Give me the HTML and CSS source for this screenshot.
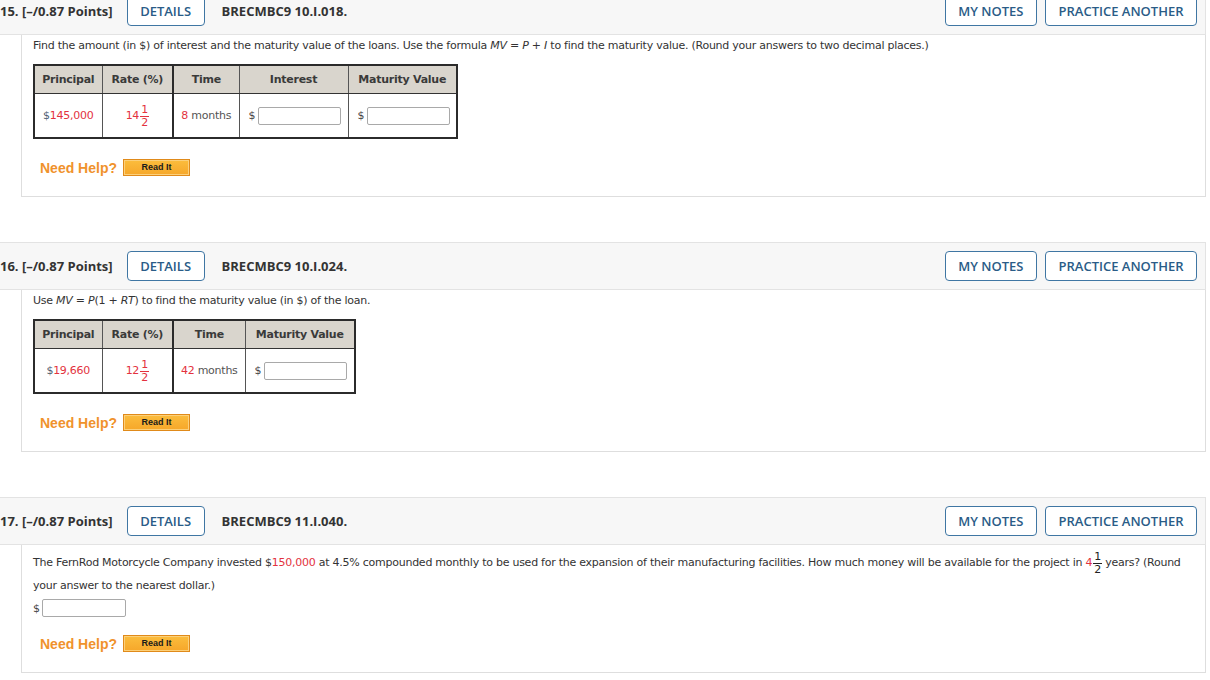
FILE: index.html
```html
<!DOCTYPE html>
<html>
<head>
<meta charset="utf-8">
<link rel="stylesheet" href="styles.css">
</head>
<body>
<div class="page">

  <section class="question first">
    <div class="qhead">
      <span class="points">15. [–/0.87 Points]</span>
      <button class="btn">DETAILS</button>
      <span class="code">BRECMBC9 10.I.018.</span>
      <div class="actions">
        <button class="btn">MY NOTES</button>
        <button class="btn">PRACTICE ANOTHER</button>
      </div>
    </div>
    <div class="qbody">
      <p class="prompt">Find the amount (in $) of interest and the maturity value of the loans. Use the formula <i>MV</i> = <i>P</i> + <i>I</i> to find the maturity value. (Round your answers to two decimal places.)</p>
      <table class="loan">
        <colgroup><col style="width:68px"><col style="width:71px"><col style="width:66px"><col style="width:109px"><col style="width:109px"></colgroup>
        <tr><th>Principal</th><th class="sep">Rate (%)</th><th>Time</th><th>Interest</th><th>Maturity Value</th></tr>
        <tr>
          <td><span class="dollar">$</span><span class="red">145,000</span></td>
          <td class="sep"><span class="red">14<span class="frac"><span class="num">1</span><span class="den">2</span></span></span></td>
          <td><span class="red">8</span> months</td>
          <td class="inp"><span class="cur">$</span><span class="box"></span></td>
          <td class="inp"><span class="cur">$</span><span class="box"></span></td>
        </tr>
      </table>
      <div class="help"><span class="need">Need Help?</span><span class="readit">Read It</span></div>
    </div>
  </section>

  <section class="question">
    <div class="qhead">
      <span class="points">16. [–/0.87 Points]</span>
      <button class="btn">DETAILS</button>
      <span class="code">BRECMBC9 10.I.024.</span>
      <div class="actions">
        <button class="btn">MY NOTES</button>
        <button class="btn">PRACTICE ANOTHER</button>
      </div>
    </div>
    <div class="qbody">
      <p class="prompt">Use <i>MV</i> = <i>P</i>(1 + <i>RT</i>) to find the maturity value (in $) of the loan.</p>
      <table class="loan">
        <colgroup><col style="width:68px"><col style="width:71px"><col style="width:72px"><col style="width:110px"></colgroup>
        <tr><th>Principal</th><th class="sep">Rate (%)</th><th>Time</th><th>Maturity Value</th></tr>
        <tr>
          <td><span class="dollar">$</span><span class="red">19,660</span></td>
          <td class="sep"><span class="red">12<span class="frac"><span class="num">1</span><span class="den">2</span></span></span></td>
          <td><span class="red">42</span> months</td>
          <td class="inp"><span class="cur">$</span><span class="box"></span></td>
        </tr>
      </table>
      <div class="help"><span class="need">Need Help?</span><span class="readit">Read It</span></div>
    </div>
  </section>

  <section class="question">
    <div class="qhead">
      <span class="points">17. [–/0.87 Points]</span>
      <button class="btn">DETAILS</button>
      <span class="code">BRECMBC9 11.I.040.</span>
      <div class="actions">
        <button class="btn">MY NOTES</button>
        <button class="btn">PRACTICE ANOTHER</button>
      </div>
    </div>
    <div class="qbody">
      <p class="prompt long"><span class="ln">The FernRod Motorcycle Company invested $<span class="red">150,000</span> at 4.5% compounded monthly to be used for the expansion of their manufacturing facilities. How much money will be available for the project in <span class="red">4</span><span class="frac"><span class="num">1</span><span class="den">2</span></span> years? (Round</span> <span class="ln">your answer to the nearest dollar.)</span></p>
      <div class="answer"><span class="cur">$</span><span class="box"></span></div>
      <div class="help tight"><span class="need">Need Help?</span><span class="readit">Read It</span></div>
    </div>
  </section>

</div>
</body>
</html>
```

FILE: styles.css
```css
html, body {
  margin: 0;
  padding: 0;
  background: #ffffff;
}

body {
  font-family: "DejaVu Sans", Verdana, sans-serif;
  font-size: 11px;
  letter-spacing: -0.25px;
  color: #333333;
}

.page {
  width: 1206px;
  margin-top: -13px;
}

.question {
  margin-bottom: 45px;
}

.qhead {
  display: flex;
  align-items: center;
  height: 46px;
  background: #f7f7f7;
  border-top: 1px solid #e3e3e3;
  border-bottom: 1px solid #e3e3e3;
  border-right: 1px solid #e3e3e3;
  font-family: "Open Sans", sans-serif;
  font-weight: 700;
  font-size: 13px;
  letter-spacing: 0;
  color: #333333;
  padding-right: 8px;
}

.points {
  margin-right: 14px;
}

.code {
  margin-left: 17px;
}

.btn {
  height: 30px;
  padding: 0 12.5px;
  background: #ffffff;
  border: 1.5px solid #3f76a3;
  border-radius: 4px;
  font-family: "Open Sans", sans-serif;
  font-weight: 600;
  font-size: 13px;
  letter-spacing: 0;
  color: #2a5c87;
  line-height: 27px;
  box-sizing: border-box;
}

.actions {
  margin-left: auto;
  display: flex;
  gap: 8px;
}

.qbody {
  margin-left: 21px;
  border: 1px solid #dedede;
  border-top: none;
  padding: 0 11px 20px 11px;
  background: #fff;
}

.prompt {
  margin: 0;
  line-height: 22px;
}

.prompt i {
  font-style: italic;
}

.prompt.long {
  padding-top: 6px;
}

.prompt .ln {
  display: inline-block;
}

.red {
  color: #e3323e;
}

.dollar {
  color: #4f5f73;
}

.loan {
  margin-top: 7px;
  border-collapse: collapse;
  border: 2px solid #2b2b2b;
  table-layout: fixed;
}

.loan th {
  height: 27px;
  background: #d9d5cd;
  font-weight: bold;
  color: #3a3a3a;
  border: 1px solid #555;
  border-bottom: 1px solid #333;
  text-align: center;
  padding: 0;
}

.loan td {
  height: 43px;
  border: 1px solid #555;
  text-align: center;
  padding: 0;
  color: #555;
}

.loan .sep {
  border-right: 2px solid #2b2b2b;
}

.loan td.inp {
  text-align: left;
  padding-left: 9px;
}

.cur {
  color: #444;
  margin-right: 3px;
}

.box {
  display: inline-block;
  vertical-align: middle;
  width: 81px;
  height: 16px;
  border: 1px solid #a9a9a9;
  border-radius: 2px;
  background: #fff;
}

.frac {
  display: inline-flex;
  flex-direction: column;
  vertical-align: middle;
  text-align: center;
  line-height: 11px;
  margin-left: 1px;
  font-size: 11px;
}

.frac .num {
  border-bottom: 1px solid currentColor;
  padding: 0 1px 1px;
}

.prompt .frac {
  color: #222;
}

.answer {
  margin-top: 2px;
  height: 18px;
  display: flex;
  align-items: center;
}

.answer .cur {
  margin-right: 2px;
}

.answer .box {
  width: 82px;
}

.help {
  margin-top: 20px;
  height: 17px;
  display: flex;
  align-items: center;
  padding-left: 7px;
}

.help.tight {
  margin-top: 18px;
}

.need {
  font-family: "Liberation Sans", Arial, sans-serif;
  font-weight: bold;
  font-size: 14px;
  letter-spacing: 0;
  color: #f0922c;
  margin-right: 6px;
}

.readit {
  display: inline-block;
  width: 67px;
  height: 17px;
  box-sizing: border-box;
  border: 1px solid #e08a1a;
  background: linear-gradient(#fbbd3d, #f6a72a);
  box-shadow: inset 0 0 0 1px #fcd07a;
  font-family: "Liberation Sans", Arial, sans-serif;
  font-weight: bold;
  font-size: 9px;
  letter-spacing: 0;
  line-height: 15px;
  text-align: center;
  color: #1a1a1a;
}
```
